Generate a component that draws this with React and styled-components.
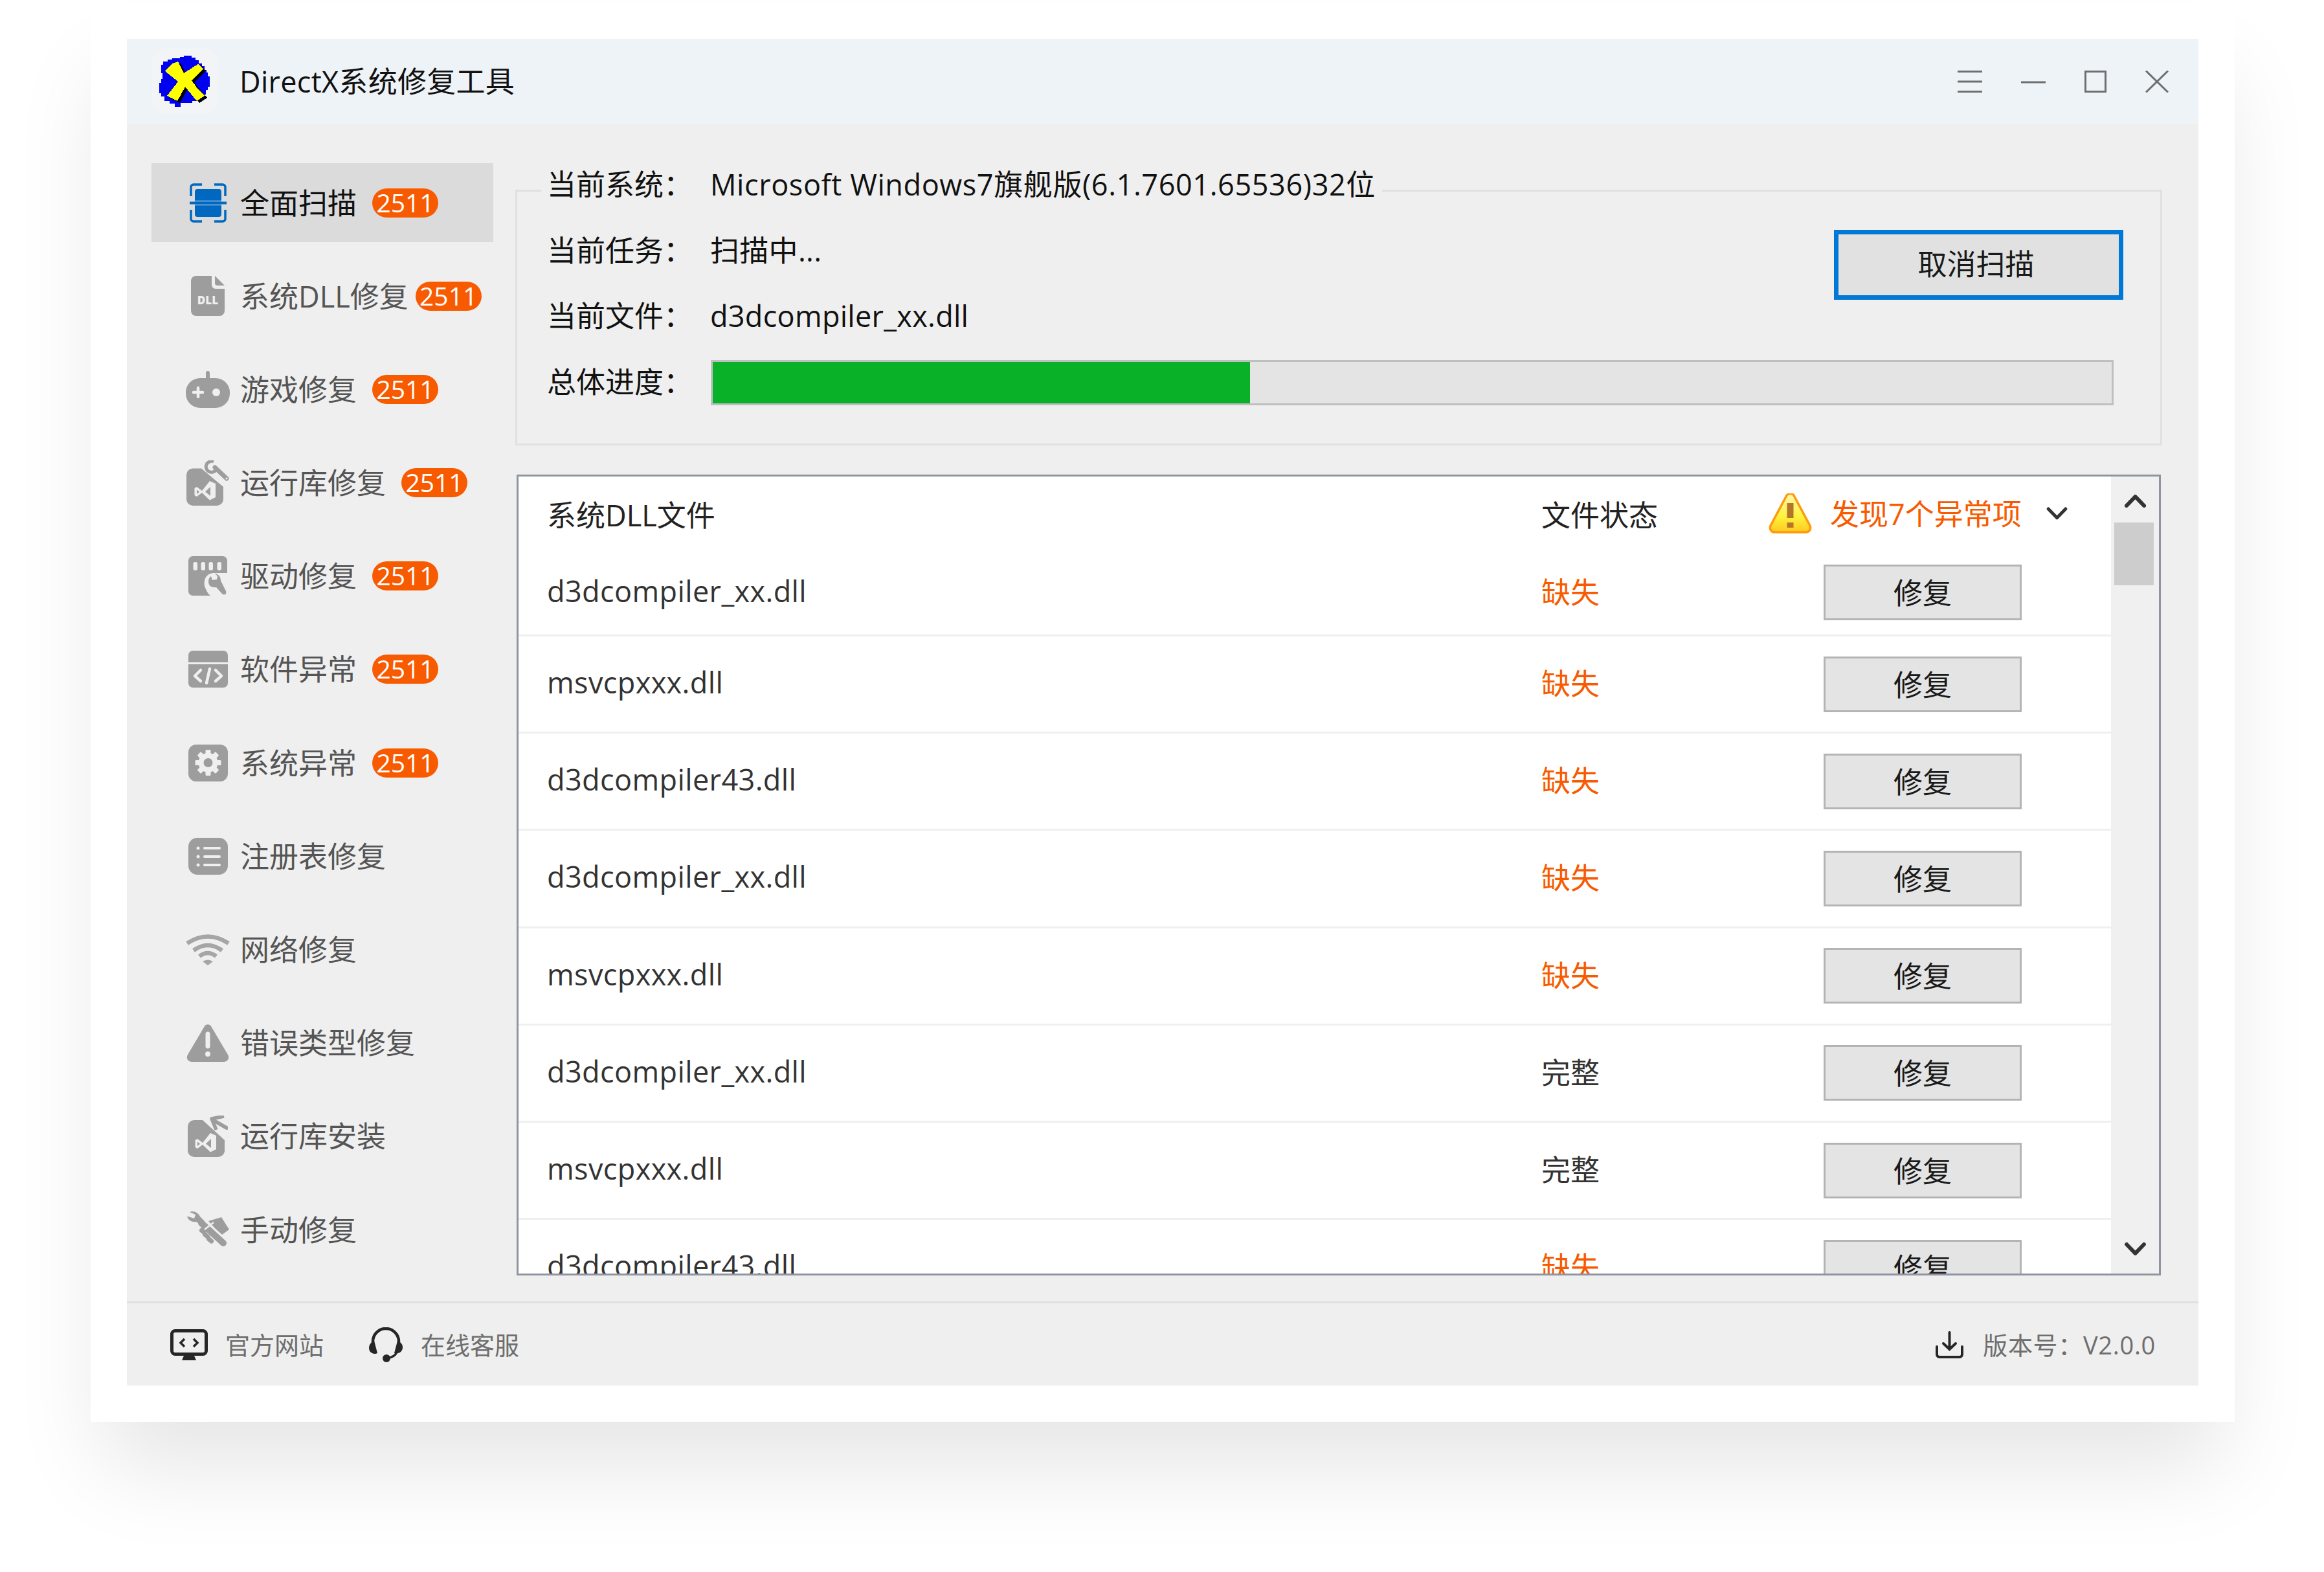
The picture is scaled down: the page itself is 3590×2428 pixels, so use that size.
import React from "react";
import styled, { createGlobalStyle } from "styled-components";

const GlobalStyle = createGlobalStyle`
  html, body {
    margin: 0;
    padding: 0;
    background: #fff;
  }
  * {
    box-sizing: border-box;
  }
  body {
    font-family: "Open Sans", "Noto Sans CJK SC", sans-serif;
    font-size: 45px;
  }
`;

const Stage = styled.div`
  width: 3590px;
  height: 2428px;
  padding: 4px 0 0 140px;
  overflow: hidden;
`;

const Frame = styled.div`
  width: 3312px;
  height: 2192px;
  padding: 56px;
  background: #fff;
  box-shadow: 0 90px 130px -20px rgba(0, 0, 0, 0.1);
`;

const Window = styled.div`
  display: flex;
  flex-direction: column;
  height: 100%;
  background: #efefef;
`;

const TitleBar = styled.header`
  display: flex;
  align-items: center;
  height: 131px;
  padding: 0 46px 0 39px;
  background: #eef3f7;
`;

const LogoTile = styled.div`
  display: flex;
  align-items: center;
  justify-content: center;
  width: 102px;
  height: 102px;
  border-radius: 22px;
  background: #f3f4f6;
`;

const AppTitle = styled.h1`
  flex: 1;
  margin: 0 0 0 33px;
  font-size: 45px;
  font-weight: 400;
  letter-spacing: 0.3px;
  color: #111;
  line-height: 1;
`;

const Controls = styled.div`
  display: flex;
  align-items: center;
  gap: 60px;
`;

const Body = styled.div`
  flex: 1;
  display: flex;
  min-height: 0;
`;

const Sidebar = styled.nav`
  display: flex;
  flex-direction: column;
  gap: 22.2px;
  width: 600px;
  padding: 61px 0 0 38px;
`;

const NavItem = styled.div`
  display: flex;
  align-items: center;
  flex: none;
  width: 528px;
  height: 122px;
  padding-left: 48px;
  background: ${(p) => (p.$active ? "#dbdbdb" : "transparent")};
  color: ${(p) => (p.$active ? "#111" : "#555")};
`;

const NavIcon = styled.span`
  display: flex;
  align-items: center;
  justify-content: center;
  flex: none;
  width: 78px;
  margin-right: 11px;
`;

const NavLabel = styled.span`
  line-height: 1;
  white-space: nowrap;
`;

const Badge = styled.span`
  flex: none;
  width: 102px;
  height: 45px;
  margin-left: ${(p) => (p.$tight ? "11px" : "24px")};
  border-radius: 23px;
  background: #f85a00;
  color: #fff;
  font-size: 39px;
  line-height: 44px;
  text-align: center;
`;

const Main = styled.main`
  flex: 1;
  min-width: 0;
  padding: 102px 56px 0 0;
`;

const GroupBox = styled.section`
  height: 395px;
  padding: 0 72px 0 46px;
  border: 3px solid #e0e0e0;
`;

const TopArea = styled.div`
  display: flex;
  justify-content: space-between;
  margin-top: -62px;
`;

const InfoRow = styled.div`
  display: flex;
  align-items: center;
  width: fit-content;
  height: 101.5px;
  color: #111;
`;

const LegendRow = styled(InfoRow)`
  margin-left: -9px;
  padding: 0 10px 0 9px;
  background: #efefef;
`;

const InfoLabel = styled.span`
  flex: none;
  width: 252px;
  line-height: 1;
`;

const InfoValue = styled.span`
  line-height: 1;
  white-space: nowrap;
  letter-spacing: ${(p) => (p.$wide ? "0.6px" : "0.3px")};
`;

const CancelButton = styled.button`
  width: 447px;
  height: 108px;
  margin: 121px -15px 0 0;
  padding: 0 8px 8px 0;
  border: 7px solid #0078d7;
  border-radius: 0;
  background: #e1e1e1;
  color: #1a1a1a;
  font: inherit;
`;

const ProgressTrack = styled.div`
  flex: 1;
  height: 70px;
  margin: 4px 0 0 1px;
  border: 3.5px solid #bfbfbf;
  background: #e4e4e4;
`;

const ProgressFill = styled.div`
  width: ${(p) => p.$value}%;
  height: 100%;
  background: #08b128;
`;

const ProgressRow = styled(InfoRow)`
  width: 100%;
`;

const TableBox = styled.section`
  display: flex;
  height: 1237px;
  margin: 45px 2px 0;
  border: 3px solid #8e94a0;
  background: #fff;
`;

const List = styled.div`
  flex: 1;
  min-width: 0;
  overflow: hidden;
`;

const GRID = "1536px 436px 306px";

const HeadRow = styled.div`
  display: grid;
  grid-template-columns: ${GRID};
  align-items: center;
  height: 114px;
  padding: 0 0 0 44px;
  color: #222;
`;

const FindingCell = styled.div`
  display: flex;
  align-items: center;
  width: max-content;
  margin-left: -85px;
  color: #f85a00;
  white-space: nowrap;

  svg {
    flex: none;
  }
`;

const FindingText = styled.span`
  margin: 0 38px 0 28px;
  line-height: 1;
`;

const FileRow = styled.div`
  display: grid;
  grid-template-columns: ${GRID};
  align-items: center;
  height: ${(p) => (p.$first ? "133px" : "150.2px")};
  padding: 0 0 0 44px;
  border-bottom: 3px solid #efefef;
  color: #333;
`;

const FileName = styled.span`
  line-height: 1;
  letter-spacing: 0.4px;
  transform: translateY(-3px);
`;

const FileStatus = styled.span`
  line-height: 1;
  transform: translateY(-1px);
  color: ${(p) => (p.$missing ? "#f85a00" : "#333")};
`;

const RepairButton = styled.button`
  width: 306px;
  height: 86px;
  padding: 0 0 3px;
  border: 3.5px solid #b4b4b4;
  border-radius: 0;
  background: #e4e4e4;
  color: #1a1a1a;
  font: inherit;
`;

const ScrollBar = styled.div`
  display: flex;
  flex-direction: column;
  align-items: center;
  flex: none;
  width: 74px;
  padding-top: 28px;
  background: #f0f0f0;
`;

const ScrollThumb = styled.div`
  width: 61px;
  height: 97px;
  margin-top: 23px;
  margin-left: -3px;
  background: #cdcdcd;
`;

const ScrollDown = styled.span`
  display: flex;
  margin-top: auto;
  margin-bottom: 28px;
`;

const Footer = styled.footer`
  display: flex;
  align-items: center;
  height: 130px;
  padding: 0 66px 0 67px;
  border-top: 3px solid #e0e0e0;
  color: #6e6e6e;
  font-size: 38px;
`;

const FooterLink = styled.div`
  display: flex;
  align-items: center;
  margin-right: 69px;
  line-height: 1;
`;

const FooterText = styled.span`
  margin-left: ${(p) => p.$gap}px;
  letter-spacing: ${(p) => p.$spacing || 0}px;
`;

const Version = styled(FooterLink)`
  margin: 0 0 0 auto;
`;

const GREY = "#9d9d9d";
const BG = "#efefef";

const MenuIcon = () => (
  <svg width="38" height="34" viewBox="0 0 38 34">
    <path d="M0 1.5H38M0 17H38M0 32.5H38" stroke="#6e6e6e" strokeWidth="3" />
  </svg>
);

const MinIcon = () => (
  <svg width="38" height="34" viewBox="0 0 38 34">
    <path d="M0 18H38" stroke="#6e6e6e" strokeWidth="3" />
  </svg>
);

const MaxIcon = () => (
  <svg width="34" height="34" viewBox="0 0 34 34">
    <rect x="1.5" y="1.5" width="31" height="31" fill="none" stroke="#6e6e6e" strokeWidth="3" />
  </svg>
);

const CloseIcon = () => (
  <svg width="36" height="34" viewBox="0 0 36 34">
    <path d="M1 0.5L35 33.5M35 0.5L1 33.5" stroke="#6e6e6e" strokeWidth="3" />
  </svg>
);

const Logo = () => (
  <svg width="80" height="80" viewBox="0 0 80 80" shapeRendering="crispEdges">
    <path
      fill="#0000f0"
      d="M38 0h12v3h6v4h5v5h5v4h4v6h3v4h2v6h3v16h-3v5h-3v7h-5v6h-8v4h-8v3H33v6H24v-5h-8v-4H8v-7H3v-5H0V42h3v-6h2V27H3V14h3V9h7V6h7V4h12V2h6z"
    />
    <path
      fill="#000"
      transform="translate(4 3)"
      d="M20 12L29 9L38 27L60 13L68 21L50 38L60 52L70 62L58 70L40 48L28 70L12 62L29 40L9 24z"
    />
    <path
      fill="#ffff00"
      d="M20 12L29 9L38 27L60 13L68 21L50 38L60 52L70 62L58 70L40 48L28 70L12 62L29 40L9 24z"
    />
  </svg>
);

const ScanIcon = () => (
  <svg width="57" height="61" viewBox="0 0 57 61">
    <path
      d="M19 2H6a4 4 0 0 0-4 4v14M38 2h13a4 4 0 0 1 4 4v14M19 59H6a4 4 0 0 1-4-4V41M38 59h13a4 4 0 0 0 4-4V41"
      fill="none"
      stroke="#0068c0"
      strokeWidth="3.5"
    />
    <rect x="8" y="9" width="41" height="43" rx="4" fill="#0068c0" />
    <path d="M0 30.5H57" stroke="#0068c0" strokeWidth="4" />
    <path d="M8 27.5H49M8 33.5H49" stroke="#8fbce3" strokeWidth="1.5" />
  </svg>
);

const DllIcon = () => (
  <svg width="52" height="62" viewBox="0 0 52 62">
    <path
      d="M8 0H32V14a6 6 0 0 0 6 6H52V54a8 8 0 0 1-8 8H8a8 8 0 0 1-8-8V8a8 8 0 0 1 8-8z"
      fill={GREY}
    />
    <path d="M37 0L52 15H41a4 4 0 0 1-4-4z" fill={GREY} />
    <text
      x="26"
      y="44"
      textAnchor="middle"
      fontFamily="'Open Sans', sans-serif"
      fontWeight="800"
      fontSize="17"
      fill={BG}
    >
      DLL
    </text>
  </svg>
);

const GameIcon = () => (
  <svg width="68" height="57" viewBox="0 0 68 57">
    <rect x="31" y="0" width="6" height="14" rx="3" fill={GREY} />
    <rect x="0" y="11" width="68" height="46" rx="22" fill={GREY} />
    <path d="M12 33H26M19 26V40" stroke={BG} strokeWidth="4.5" strokeLinecap="round" />
    <circle cx="47" cy="33" r="6" fill={BG} />
  </svg>
);

const vsPath =
  "M36 32L45 36V57L36 61.5L24 50L16 56L12.5 54V43L16 41L24 47ZM16 45.5V52L20 48.7ZM37 41L29 48.5L37 55Z";

const RuntimeIcon = () => (
  <svg width="66" height="70" viewBox="0 0 66 70">
    <path
      d="M10 12.5H23L57 41V60a10 10 0 0 1-10 10H10a10 10 0 0 1-10-10V22a10 10 0 0 1 10-9.5z"
      fill={GREY}
    />
    <path d={vsPath} fill={BG} fillRule="evenodd" />
    <path d="M42 2A8.5 8.5 0 1 0 47 12" fill="none" stroke={GREY} strokeWidth="5" />
    <path d="M44 11L62 28" stroke={GREY} strokeWidth="7" strokeLinecap="round" />
    <circle cx="62" cy="28" r="1.6" fill={BG} />
  </svg>
);

const DriverIcon = () => (
  <svg width="60" height="61" viewBox="0 0 60 61">
    <rect x="0" y="0" width="60" height="61" rx="7" fill={GREY} />
    <g fill={BG}>
      <rect x="7.5" y="9" width="6.5" height="13" rx="3" />
      <rect x="19.5" y="9" width="6.5" height="13" rx="3" />
      <rect x="31.5" y="9" width="6.5" height="13" rx="3" />
      <rect x="44.5" y="9" width="6.5" height="13" rx="3" />
    </g>
    <path d="M40 26C28 26 23 36 25 46C27 52 30 58 34 61H60V26z" fill={BG} />
    <path
      d="M40 27C46 27 50 31 50 38L58 54C60 59 55 61 52 58L43 48C36 49 31 46 31 39C31 35 33 32 35 31L37 37L44 36L45 31C44 29 42 28 40 27z"
      fill={GREY}
    />
  </svg>
);

const SoftwareIcon = () => (
  <svg width="61" height="57" viewBox="0 0 61 57">
    <path d="M7 0H54a7 7 0 0 1 7 7V18H0V7a7 7 0 0 1 7-7z" fill={GREY} />
    <path d="M0 21H61V50a7 7 0 0 1-7 7H7a7 7 0 0 1-7-7z" fill={GREY} />
    <path
      d="M19 30L10 39L19 47M42 30L51 39L42 47M33 28L28 50"
      fill="none"
      stroke={BG}
      strokeWidth="4.5"
      strokeLinecap="round"
      strokeLinejoin="round"
    />
  </svg>
);

const GearIcon = () => (
  <svg width="61" height="57" viewBox="0 0 61 57">
    <rect width="61" height="57" rx="12" fill={GREY} />
    <g fill={BG} transform="translate(30.5 28)">
      <circle r="15" />
      {[0, 45, 90, 135, 180, 225, 270, 315].map((a) => (
        <rect key={a} x="-4" y="-20" width="8" height="9" rx="1.5" transform={`rotate(${a})`} />
      ))}
    </g>
    <circle cx="30.5" cy="28" r="7" fill={GREY} />
  </svg>
);

const RegistryIcon = () => (
  <svg width="61" height="57" viewBox="0 0 61 57">
    <rect width="61" height="57" rx="14" fill={GREY} />
    <path
      d="M25 16H48M25 29H48M25 42H48"
      stroke={BG}
      strokeWidth="4"
      strokeLinecap="round"
    />
    <circle cx="15" cy="16" r="2.5" fill={BG} />
    <circle cx="15" cy="29" r="2.5" fill={BG} />
    <circle cx="15" cy="42" r="2.5" fill={BG} />
  </svg>
);

const WifiIcon = () => (
  <svg width="68" height="48" viewBox="0 0 68 48">
    <g fill="none" stroke="#a6a6a6" strokeWidth="6.5">
      <path d="M2 14Q34 -7 66 14" />
      <path d="M12 25Q34 9 56 25" />
      <path d="M21 34Q34 24 47 34" />
    </g>
    <path d="M26 42Q34 37 42 42L34 48z" fill="#a6a6a6" />
  </svg>
);

const AlertIcon = () => (
  <svg width="66" height="58" viewBox="0 0 66 58">
    <path
      d="M28 3a6 6 0 0 1 10 0L64 47c3 5 0 11-6 11H8c-6 0-9-6-6-11z"
      fill={GREY}
    />
    <path d="M33 15V34" stroke={BG} strokeWidth="7" strokeLinecap="round" />
    <circle cx="33" cy="46" r="4" fill={BG} />
  </svg>
);

const InstallIcon = () => (
  <svg width="62" height="64" viewBox="0 0 62 64">
    <path
      d="M10 7H23L57 38V54a10 10 0 0 1-10 10H10a10 10 0 0 1-10-10V17a10 10 0 0 1 10-10z"
      fill={GREY}
    />
    <path d={vsPath} fill={BG} fillRule="evenodd" transform="translate(-1 -5)" />
    <path d="M39 7L60 19" stroke={GREY} strokeWidth="6" strokeLinecap="round" />
    <path d="M56 1L37 5L44 22" fill="none" stroke={GREY} strokeWidth="5.5" strokeLinejoin="round" />
  </svg>
);

const ManualIcon = () => (
  <svg width="66" height="56" viewBox="0 0 66 56">
    <g fill={GREY}>
      <path d="M1 8C3 14 9 17 15 16L22 21L28 15L21 8C19 3 14 0 8 0L5 1L14 5L12 11L3 8z" />
      <path d="M34 15L54 9L66 28L55 36L44 26z" />
      <rect x="20" y="27" width="11" height="7" rx="3" transform="rotate(40 25 30)" />
      <rect x="25" y="34" width="12" height="7" rx="3" transform="rotate(40 31 37)" />
      <rect x="31" y="41" width="12" height="7" rx="3" transform="rotate(40 37 44)" />
    </g>
    <path d="M23 18L57 49" stroke={GREY} strokeWidth="10" strokeLinecap="round" />
    <path d="M28 28L42 17" stroke={BG} strokeWidth="2.5" />
  </svg>
);

const WarnIcon = () => (
  <svg width="67" height="62" viewBox="0 0 67 62">
    <defs>
      <linearGradient id="warnFill" x1="0" y1="0" x2="0" y2="1">
        <stop offset="0" stopColor="#fff8b0" />
        <stop offset="0.6" stopColor="#fff23c" />
        <stop offset="1" stopColor="#ffc81e" />
      </linearGradient>
    </defs>
    <path
      d="M27 5a7 7 0 0 1 13 0L64 50c2 5-1 10-6 10H9c-5 0-8-5-6-10z"
      fill="url(#warnFill)"
      stroke="#ff9a0e"
      strokeWidth="3.5"
    />
    <rect x="28.5" y="15" width="10" height="23" fill="#b4752a" />
    <rect x="28.5" y="45" width="10" height="8" fill="#b4752a" />
  </svg>
);

const ChevronDown = ({ size = 33, stroke = 5, color = "#333" }) => (
  <svg width={size} height={size * 0.6} viewBox="0 0 33 20">
    <path
      d="M3 3L16.5 17L30 3"
      fill="none"
      stroke={color}
      strokeWidth={stroke}
      strokeLinecap="round"
      strokeLinejoin="round"
    />
  </svg>
);

const ChevronUp = () => (
  <svg width="33" height="20" viewBox="0 0 33 20">
    <path
      d="M3 17L16.5 3L30 17"
      fill="none"
      stroke="#333"
      strokeWidth="6"
      strokeLinecap="round"
      strokeLinejoin="round"
    />
  </svg>
);

const MonitorIcon = () => (
  <svg width="58" height="48" viewBox="0 0 58 48">
    <rect x="2.5" y="2.5" width="53" height="36" rx="5" fill="none" stroke="#262626" strokeWidth="5" />
    <path d="M21 41H37L40 48H18z" fill="#262626" />
    <path
      d="M22 15L16 21L22 27M36 15L42 21L36 27"
      fill="none"
      stroke="#262626"
      strokeWidth="3.5"
    />
  </svg>
);

const HeadsetIcon = () => (
  <svg width="54" height="54" viewBox="0 0 54 54">
    <path d="M7 24V22A20 20 0 0 1 47 22V24" fill="none" stroke="#262626" strokeWidth="4.5" />
    <path d="M9 21L14 40C8 43 1 39 1 32C1 27 4 23 9 21z" fill="#262626" />
    <path d="M45 21L40 40C46 42 53 38 53 31C53 26 50 23 45 21z" fill="#262626" />
    <path d="M44 38C42 44 36 47 28 48" fill="none" stroke="#262626" strokeWidth="3.5" />
    <circle cx="28" cy="48" r="6" fill="#262626" />
  </svg>
);

const DownloadIcon = () => (
  <svg width="43" height="42" viewBox="0 0 43 42">
    <path
      d="M21.5 2V27M12 19L21.5 28L31 19M2 24V36a4 4 0 0 0 4 4H37a4 4 0 0 0 4-4V24"
      fill="none"
      stroke="#262626"
      strokeWidth="4"
      strokeLinecap="round"
    />
  </svg>
);

const navItems = [
  { label: "全面扫描", icon: <ScanIcon />, badge: true, active: true },
  { label: "系统DLL修复", icon: <DllIcon />, badge: true, tight: true },
  { label: "游戏修复", icon: <GameIcon />, badge: true },
  { label: "运行库修复", icon: <RuntimeIcon />, badge: true },
  { label: "驱动修复", icon: <DriverIcon />, badge: true },
  { label: "软件异常", icon: <SoftwareIcon />, badge: true },
  { label: "系统异常", icon: <GearIcon />, badge: true },
  { label: "注册表修复", icon: <RegistryIcon /> },
  { label: "网络修复", icon: <WifiIcon /> },
  { label: "错误类型修复", icon: <AlertIcon /> },
  { label: "运行库安装", icon: <InstallIcon /> },
  { label: "手动修复", icon: <ManualIcon /> },
];

const files = [
  { name: "d3dcompiler_xx.dll", missing: true },
  { name: "msvcpxxx.dll", missing: true },
  { name: "d3dcompiler43.dll", missing: true },
  { name: "d3dcompiler_xx.dll", missing: true },
  { name: "msvcpxxx.dll", missing: true },
  { name: "d3dcompiler_xx.dll", missing: false },
  { name: "msvcpxxx.dll", missing: false },
  { name: "d3dcompiler43.dll", missing: true },
];

export default function App() {
  return (
    <Stage>
      <GlobalStyle />
      <Frame>
        <Window>
          <TitleBar>
            <LogoTile>
              <Logo />
            </LogoTile>
            <AppTitle>DirectX系统修复工具</AppTitle>
            <Controls>
              <MenuIcon />
              <MinIcon />
              <MaxIcon />
              <CloseIcon />
            </Controls>
          </TitleBar>
          <Body>
            <Sidebar>
              {navItems.map((item) => (
                <NavItem key={item.label} $active={item.active}>
                  <NavIcon>{item.icon}</NavIcon>
                  <NavLabel>{item.label}</NavLabel>
                  {item.badge && <Badge $tight={item.tight}>2511</Badge>}
                </NavItem>
              ))}
            </Sidebar>
            <Main>
              <GroupBox>
                <TopArea>
                  <div>
                    <LegendRow>
                      <InfoLabel>当前系统：</InfoLabel>
                      <InfoValue $wide>Microsoft Windows7旗舰版(6.1.7601.65536)32位</InfoValue>
                    </LegendRow>
                    <InfoRow>
                      <InfoLabel>当前任务：</InfoLabel>
                      <InfoValue>扫描中...</InfoValue>
                    </InfoRow>
                    <InfoRow>
                      <InfoLabel>当前文件：</InfoLabel>
                      <InfoValue>d3dcompiler_xx.dll</InfoValue>
                    </InfoRow>
                  </div>
                  <CancelButton>取消扫描</CancelButton>
                </TopArea>
                <ProgressRow>
                  <InfoLabel>总体进度：</InfoLabel>
                  <ProgressTrack>
                    <ProgressFill $value={38.4} />
                  </ProgressTrack>
                </ProgressRow>
              </GroupBox>
              <TableBox>
                <List>
                  <HeadRow>
                    <span>系统DLL文件</span>
                    <span>文件状态</span>
                    <FindingCell>
                      <WarnIcon />
                      <FindingText>发现7个异常项</FindingText>
                      <ChevronDown />
                    </FindingCell>
                  </HeadRow>
                  {files.map((file, i) => (
                    <FileRow key={i} $first={i === 0}>
                      <FileName>{file.name}</FileName>
                      <FileStatus $missing={file.missing}>
                        {file.missing ? "缺失" : "完整"}
                      </FileStatus>
                      <RepairButton>修复</RepairButton>
                    </FileRow>
                  ))}
                </List>
                <ScrollBar>
                  <ChevronUp />
                  <ScrollThumb />
                  <ScrollDown>
                    <ChevronDown size={33} stroke={6} />
                  </ScrollDown>
                </ScrollBar>
              </TableBox>
            </Main>
          </Body>
          <Footer>
            <FooterLink>
              <MonitorIcon />
              <FooterText $gap={27}>官方网站</FooterText>
            </FooterLink>
            <FooterLink>
              <HeadsetIcon />
              <FooterText $gap={27}>在线客服</FooterText>
            </FooterLink>
            <Version>
              <DownloadIcon />
              <FooterText $gap={30} $spacing={0.7}>版本号：V2.0.0</FooterText>
            </Version>
          </Footer>
        </Window>
      </Frame>
    </Stage>
  );
}
